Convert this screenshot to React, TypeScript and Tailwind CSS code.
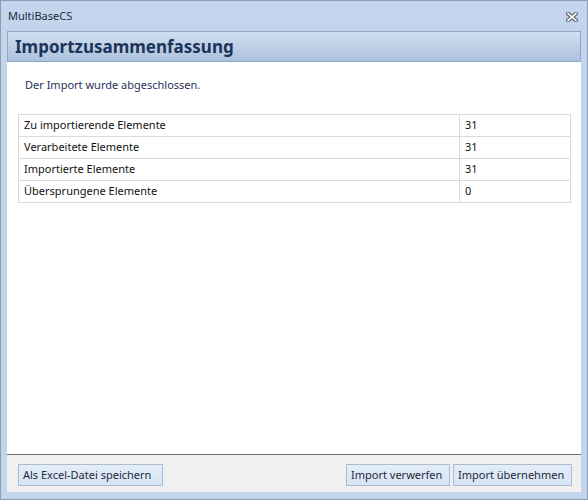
import React from "react";

const rows: [string, string][] = [
  ["Zu importierende Elemente", "31"],
  ["Verarbeitete Elemente", "31"],
  ["Importierte Elemente", "31"],
  ["Übersprungene Elemente", "0"],
];

function Btn({ children, w }: { children: React.ReactNode; w: string }) {
  return (
    <button
      className={`${w} h-[22px] pl-[4px] pb-[2px] text-left border border-[#a8bcd6] bg-gradient-to-b from-[#e4edf8] to-[#d7e4f4] text-[11px] text-[#1e2a3a] leading-none`}
    >
      {children}
    </button>
  );
}

export default function App() {
  return (
    <div
      className="w-[588px] h-[500px] border border-[#8c9cb2] bg-[#c3d5ec] flex flex-col"
      style={{ fontFamily: '"Noto Sans", "Open Sans", sans-serif' }}
    >
      <div className="h-[30px] shrink-0 flex items-center justify-between pl-[7px] pr-[9px]">
        <span className="text-[11px] text-[#1e2a3a]">MultiBaseCS</span>
        <svg width="12" height="10" viewBox="0 0 12 10" className="mt-[1px]">
          <path
            d="M2 1.5 L10 8.5 M10 1.5 L2 8.5"
            stroke="#5f6875"
            strokeWidth="4"
            strokeLinecap="square"
          />
          <path
            d="M2 1.5 L10 8.5 M10 1.5 L2 8.5"
            stroke="#ffffff"
            strokeWidth="1.6"
            strokeLinecap="square"
          />
        </svg>
      </div>
      <div className="flex-1 mx-[6px] flex flex-col bg-white">
        <div className="h-[31px] shrink-0 border border-[#8ea6c6] bg-gradient-to-b from-[#d0dff0] to-[#adc2de] flex items-center pl-[7px]">
          <span className="text-[17px] font-bold text-[#1b3459] leading-none">
            Importzusammenfassung
          </span>
        </div>
        <div className="flex-1 flex flex-col pl-[11px] pr-[10px]">
          <div className="text-[11px] text-[#27335a] pl-[7px] pt-[15px] h-[52px]">
            Der Import wurde abgeschlossen.
          </div>
          <div className="border border-[#dadada] border-b-0">
            {rows.map(([k, v]) => (
              <div key={k} className="flex h-[22px] border-b border-[#dadada] text-[11px] text-[#111]">
                <div className="w-[441px] border-r border-[#dadada] pl-[5px] flex items-center">
                  {k}
                </div>
                <div className="flex-1 pl-[5px] flex items-center">{v}</div>
              </div>
            ))}
          </div>
        </div>
        <div className="h-[38px] shrink-0 border-t border-[#6e6e6e] bg-[#f0f0f0] flex items-start justify-between pl-[11px] pr-[9px] pt-[9px]">
          <Btn w="w-[145px]">Als Excel-Datei speichern</Btn>
          <div className="flex gap-[3px]">
            <Btn w="w-[104px]">Import verwerfen</Btn>
            <Btn w="w-[119px]">Import übernehmen</Btn>
          </div>
        </div>
      </div>
      <div className="h-[7px] shrink-0" />
    </div>
  );
}
